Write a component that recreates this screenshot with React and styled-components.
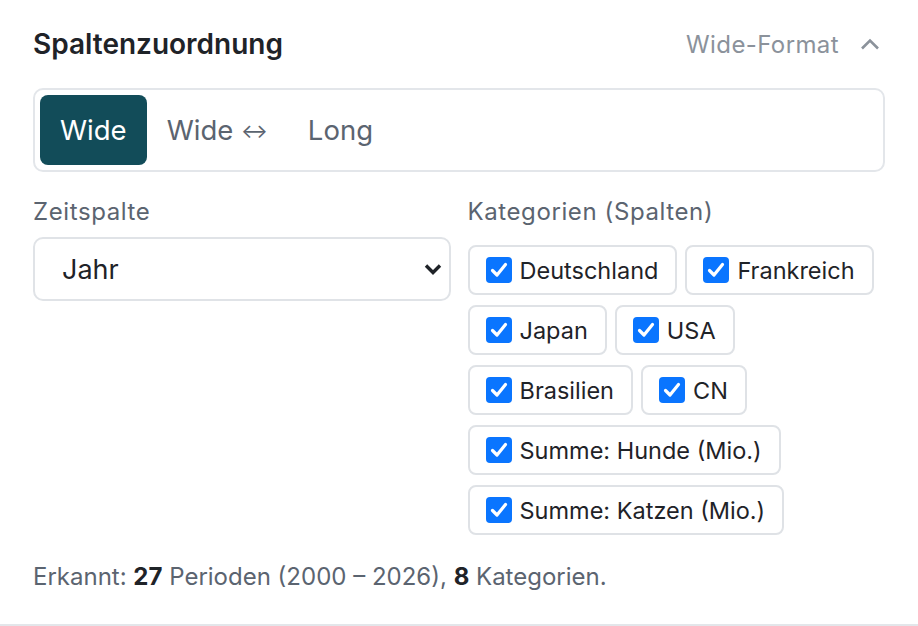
import styled, { createGlobalStyle } from 'styled-components';

const GlobalStyle = createGlobalStyle`
  * { box-sizing: border-box; }
  body {
    margin: 0;
    background: #ffffff;
    font-family: Inter, "Noto Sans", sans-serif;
    color: #1f2328;
  }
`;

const CATEGORIES = [
  'Deutschland',
  'Frankreich',
  'Japan',
  'USA',
  'Brasilien',
  'CN',
  'Summe: Hunde (Mio.)',
  'Summe: Katzen (Mio.)',
];

const Panel = styled.section`
  padding: 26px 33px 0;
  height: 626px;
  border-bottom: 2px solid #e3e6ea;
`;

const Header = styled.header`
  display: flex;
  align-items: center;
  justify-content: space-between;
  height: 36px;
`;

const Title = styled.h2`
  margin: 0;
  font-size: 28px;
  font-weight: 600;
  color: #1f2328;
`;

const HeaderMeta = styled.div`
  display: flex;
  align-items: center;
  gap: 21px;
  padding-right: 5px;
  color: #8b929b;
  font-size: 24px;
  letter-spacing: 0.4px;
`;

const Segmented = styled.div`
  display: flex;
  margin-top: 26px;
  padding: 5px;
  border: 2px solid #e3e6ea;
  border-radius: 10px;
`;

const SegButton = styled.button`
  height: 70px;
  padding: 0 20px;
  border: none;
  border-radius: 8px;
  font-family: inherit;
  font-size: 27.5px;
  background: ${(p) => (p.$active ? '#124c59' : 'transparent')};
  color: ${(p) => (p.$active ? '#ffffff' : '#5b6470')};
  cursor: pointer;
`;

const Arrow = styled.span`
  font-size: 20px;
  vertical-align: 2px;
`;

const Columns = styled.div`
  display: grid;
  grid-template-columns: 1fr 1fr;
  gap: 17px;
  margin-top: 24px;
`;

const Field = styled.div`
  display: flex;
  flex-direction: column;
`;

const Label = styled.label`
  font-size: 24px;
  color: #5b6470;
  letter-spacing: 0.6px;
  margin-bottom: 9px;
  line-height: 32px;
`;

const SelectWrap = styled.div`
  position: relative;
`;

const Select = styled.select`
  width: 100%;
  height: 64px;
  padding: 0 0 0 27px;
  border: 2px solid #e0e3e7;
  border-radius: 10px;
  background: #ffffff;
  font-family: inherit;
  font-size: 27px;
  color: #1f2328;
  appearance: none;
  outline: none;
`;

const SelectArrow = styled.svg`
  position: absolute;
  right: 9px;
  top: 50%;
  transform: translateY(-50%);
  pointer-events: none;
`;

const Chips = styled.div`
  display: flex;
  flex-wrap: wrap;
  gap: 10px 8px;
  margin-top: 8px;
`;

const Chip = styled.label`
  display: inline-flex;
  align-items: center;
  gap: 8px;
  height: 50px;
  padding: 0 17px 0 16px;
  border: 2px solid #dfe2e6;
  border-radius: 8px;
  font-size: 23.5px;
  color: #1f2328;
`;

const Box = styled.span`
  display: inline-flex;
  align-items: center;
  justify-content: center;
  width: 26px;
  height: 26px;
  border-radius: 4px;
  background: #0a75ff;
`;

const Summary = styled.p`
  margin: 26px 0 0;
  font-size: 24px;
  color: #5b6470;
  line-height: 32px;

  b {
    color: #1f2328;
    font-weight: 700;
  }
`;

const App = () => {
  return (
    <>
      <GlobalStyle />
      <Panel>
        <Header>
          <Title>Spaltenzuordnung</Title>
          <HeaderMeta>
            <span>Wide-Format</span>
            <svg width="20" height="12" viewBox="0 0 20 12" fill="none">
              <path d="M2 10.5 L10 2.5 L18 10.5" stroke="#8b929b" strokeWidth="2.6" />
            </svg>
          </HeaderMeta>
        </Header>

        <Segmented>
          <SegButton $active>Wide</SegButton>
          <SegButton>
            Wide <Arrow>↔</Arrow>
          </SegButton>
          <SegButton>Long</SegButton>
        </Segmented>

        <Columns>
          <Field>
            <Label>Zeitspalte</Label>
            <SelectWrap>
              <Select defaultValue="Jahr">
                <option>Jahr</option>
              </Select>
              <SelectArrow width="18" height="12" viewBox="0 0 18 12" fill="none">
                <path d="M2 2.5 L9 9.5 L16 2.5" stroke="#1f2328" strokeWidth="3.4" />
              </SelectArrow>
            </SelectWrap>
          </Field>
          <Field>
            <Label>Kategorien (Spalten)</Label>
            <Chips>
              {CATEGORIES.map((name) => (
                <Chip key={name}>
                  <Box>
                    <svg width="18" height="16" viewBox="0 0 18 16" fill="none">
                      <path d="M2.5 8.5 L7 13 L15.5 2.5" stroke="#ffffff" strokeWidth="3.2" strokeLinecap="round" strokeLinejoin="round" />
                    </svg>
                  </Box>
                  {name}
                </Chip>
              ))}
            </Chips>
          </Field>
        </Columns>

        <Summary>
          Erkannt: <b>27</b> Perioden (2000 – 2026), <b>8</b> Kategorien.
        </Summary>
      </Panel>
    </>
  );
};

export default App;
